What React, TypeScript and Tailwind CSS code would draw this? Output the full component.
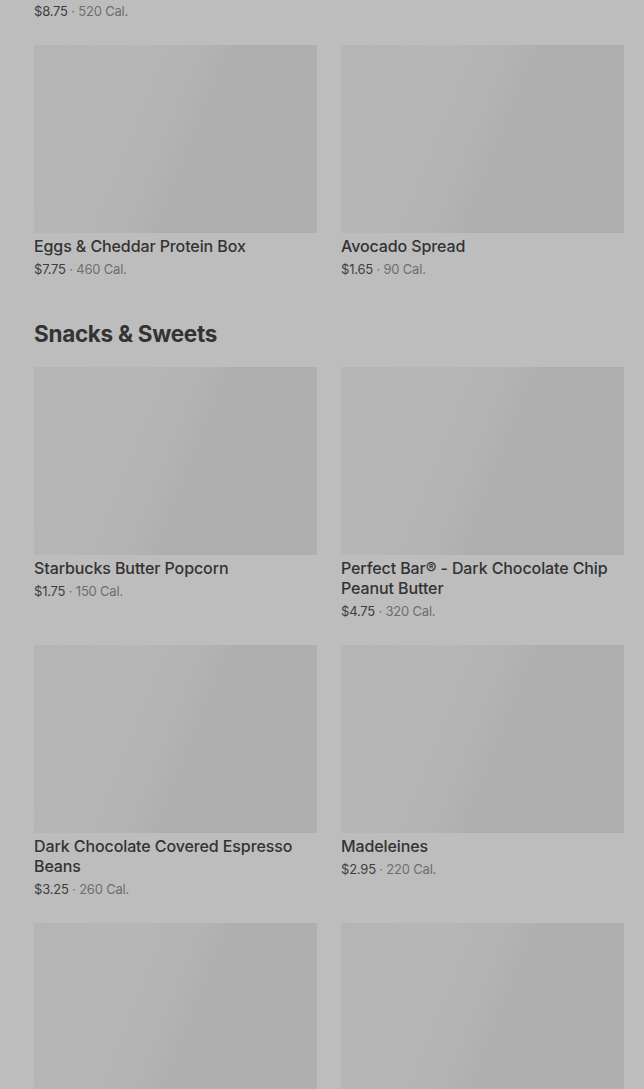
import React from 'react';

type Item = { name: string; price: string; cal: string };

const breakfastTail: Item[] = [
  { name: 'Eggs & Cheddar Protein Box', price: '$7.75', cal: '460 Cal.' },
  { name: 'Avocado Spread', price: '$1.65', cal: '90 Cal.' },
];

const snacks: Item[] = [
  { name: 'Starbucks Butter Popcorn', price: '$1.75', cal: '150 Cal.' },
  { name: 'Perfect Bar® - Dark Chocolate Chip Peanut Butter', price: '$4.75', cal: '320 Cal.' },
  { name: 'Dark Chocolate Covered Espresso Beans', price: '$3.25', cal: '260 Cal.' },
  { name: 'Madeleines', price: '$2.95', cal: '220 Cal.' },
  { name: '', price: '', cal: '' },
  { name: '', price: '', cal: '' },
];

const PriceLine = ({ price, cal }: { price: string; cal: string }) => (
  <div className="mt-[4px] text-[13px] leading-[18px] tracking-[-0.2px]">
    <span className="text-[#3d3d3d]">{price}</span>
    <span className="text-[#6e6e6e]"> · {cal}</span>
  </div>
);

const Card = ({ item }: { item: Item }) => (
  <div className="flex flex-col">
    <div className="h-[188px] w-full bg-[linear-gradient(112deg,#b5b5b5_0%,#b6b6b6_30%,#b3b3b3_48%,#afafaf_56%,#afafaf_100%)]" />
    {item.name && (
      <>
        <div className="mt-[3px] text-[16px] leading-[20px] font-medium text-[#333333] tracking-[-0.1px]">{item.name}</div>
        <PriceLine price={item.price} cal={item.cal} />
      </>
    )}
  </div>
);

const Grid = ({ items }: { items: Item[] }) => (
  <div className="grid grid-cols-2 gap-x-[24px] gap-y-[25px] items-start">
    {items.map((it, i) => (
      <Card key={i} item={it} />
    ))}
  </div>
);

export default function App() {
  return (
    <div
      className="h-[1089px] overflow-hidden bg-[#bdbdbd] pl-[34px] pr-[20px]"
      style={{ fontFamily: 'Inter, "Noto Sans", sans-serif' }}
    >
      <div className="-mt-[2px]">
        <PriceLine price="$8.75" cal="520 Cal." />
      </div>
      <div className="mt-[25px]">
        <Grid items={breakfastTail} />
      </div>
      <h2 className="mt-[42px] text-[22.5px] leading-[28px] font-bold text-[#333333] tracking-[-0.3px]">
        Snacks &amp; Sweets
      </h2>
      <div className="mt-[19px]">
        <Grid items={snacks} />
      </div>
    </div>
  );
}
